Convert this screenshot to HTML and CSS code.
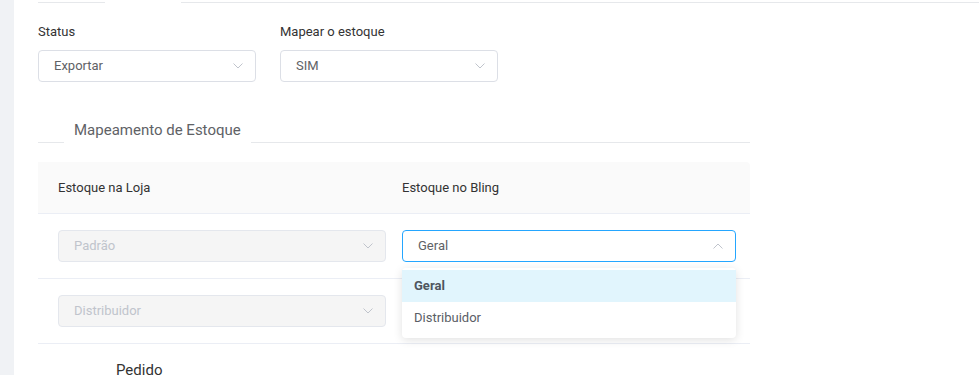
FILE: index.html
```html
<!DOCTYPE html>
<html lang="pt-BR">
<head>
<meta charset="utf-8">
<title>Mapeamento de Estoque</title>
<link rel="stylesheet" href="styles.css">
</head>
<body>
<div class="page">
  <aside class="sidebar"></aside>
  <main class="main">
    <div class="topbar">
      <div class="topbar-seg topbar-first"></div>
      <div class="topbar-gap"></div>
      <div class="topbar-seg topbar-rest"></div>
    </div>

    <div class="form-row">
      <div class="field">
        <label class="field-label">Status</label>
        <div class="select">
          <span class="select-value">Exportar</span>
          <svg class="chev" width="10" height="6" viewBox="0 0 10 6"><path d="M0.5 0.5 L5 5 L9.5 0.5" fill="none" stroke="#c0c4cc" stroke-width="1"/></svg>
        </div>
      </div>
      <div class="field">
        <label class="field-label">Mapear o estoque</label>
        <div class="select">
          <span class="select-value">SIM</span>
          <svg class="chev" width="10" height="6" viewBox="0 0 10 6"><path d="M0.5 0.5 L5 5 L9.5 0.5" fill="none" stroke="#c0c4cc" stroke-width="1"/></svg>
        </div>
      </div>
    </div>

    <div class="section-tabs">
      <div class="section-line section-line-start"></div>
      <div class="section-tab">Mapeamento de Estoque</div>
      <div class="section-line section-line-end"></div>
    </div>

    <div class="table">
      <div class="table-head">
        <div class="cell cell-left">Estoque na Loja</div>
        <div class="cell cell-right">Estoque no Bling</div>
      </div>
      <div class="table-row">
        <div class="cell cell-left">
          <div class="select select-disabled select-wide">
            <span class="select-value">Padrão</span>
            <svg class="chev" width="10" height="6" viewBox="0 0 10 6"><path d="M0.5 0.5 L5 5 L9.5 0.5" fill="none" stroke="#c0c4cc" stroke-width="1"/></svg>
          </div>
        </div>
        <div class="cell cell-right">
          <div class="select-wrap">
            <div class="select select-focus select-bling">
              <span class="select-value">Geral</span>
              <svg class="chev" width="10" height="6" viewBox="0 0 10 6"><path d="M0.5 5.5 L5 1 L9.5 5.5" fill="none" stroke="#c0c4cc" stroke-width="1"/></svg>
            </div>
            <ul class="dropdown">
              <li class="dropdown-item dropdown-item-selected">Geral</li>
              <li class="dropdown-item">Distribuidor</li>
            </ul>
          </div>
        </div>
      </div>
      <div class="table-row">
        <div class="cell cell-left">
          <div class="select select-disabled select-wide">
            <span class="select-value">Distribuidor</span>
            <svg class="chev" width="10" height="6" viewBox="0 0 10 6"><path d="M0.5 0.5 L5 5 L9.5 0.5" fill="none" stroke="#c0c4cc" stroke-width="1"/></svg>
          </div>
        </div>
        <div class="cell cell-right">
          <div class="select select-bling select-covered"></div>
        </div>
      </div>
    </div>

    <div class="next-section">
      <span class="next-tab">Pedido</span>
    </div>
  </main>
</div>
</body>
</html>
```

FILE: styles.css
```css
* { box-sizing: border-box; }
html, body { margin: 0; padding: 0; }
body {
  font-family: Roboto, "Liberation Sans", sans-serif;
  font-size: 13px;
  color: #303133;
  background: #fff;
  overflow: hidden;
}
.page { display: flex; min-height: 375px; }
.sidebar { width: 14px; flex: 0 0 14px; background: #f0f2f5; }
.main { flex: 1; padding-left: 24px; }

.topbar { display: flex; height: 3px; }
.topbar-seg { border-bottom: 1px solid #e6e8eb; }
.topbar-first { width: 67px; }
.topbar-gap { width: 76px; }
.topbar-rest { flex: 1; }

.form-row { display: flex; gap: 24px; margin-top: 20px; }
.field { width: 218px; display: flex; flex-direction: column; }
.field-label { line-height: 18px; color: #333; margin-bottom: 9px; }

.select {
  height: 32px;
  border: 1px solid #dcdfe6;
  border-radius: 4px;
  background: #fff;
  display: flex;
  align-items: center;
  justify-content: space-between;
  padding: 0 12px 0 15px;
  color: #606266;
}
.select-value { line-height: 30px; }
.chev { display: block; }
.select-disabled { background: #f5f5f5; border-color: #e4e7ed; color: #c0c4cc; }
.select-wide { width: 328px; }
.select-focus { border-color: #24a6ff; }
.select-bling { width: 334px; }

.section-tabs { display: flex; align-items: flex-end; margin-top: 37px; width: 712px; }
.section-line { border-bottom: 1px solid #e6e8eb; height: 1px; }
.section-line-start { width: 26px; }
.section-line-end { flex: 1; }
.section-tab { padding: 0 10px 2px; font-size: 15px; line-height: 22px; color: #606266; }

.table { width: 712px; margin-top: 19px; }
.table-head {
  display: flex;
  height: 52px;
  align-items: center;
  background: #fafafa;
  border-bottom: 1px solid #ebeef5;
  border-radius: 0 4px 0 0;
  color: #333;
}
.table-row { display: flex; height: 65px; align-items: center; border-bottom: 1px solid #ebeef5; }
.cell-left { width: 364px; padding-left: 20px; }
.cell-right { flex: 1; }

.select-wrap { position: relative; width: 334px; }
.dropdown {
  position: absolute;
  top: 38px;
  left: 0;
  width: 334px;
  margin: 0;
  padding: 2px 0 4px;
  list-style: none;
  background: #fff;
  border-radius: 4px;
  box-shadow: 0 2px 10px rgba(0, 0, 0, 0.12);
  z-index: 10;
}
.dropdown-item { height: 32px; line-height: 32px; padding: 0 12px; color: #5a5e66; }
.dropdown-item-selected { background: #e1f5fd; font-weight: bold; color: #4f555e; }

.next-section { padding-left: 78px; margin-top: 17px; line-height: 18px; }
.next-tab { font-size: 15px; line-height: 18px; color: #333; }
```
